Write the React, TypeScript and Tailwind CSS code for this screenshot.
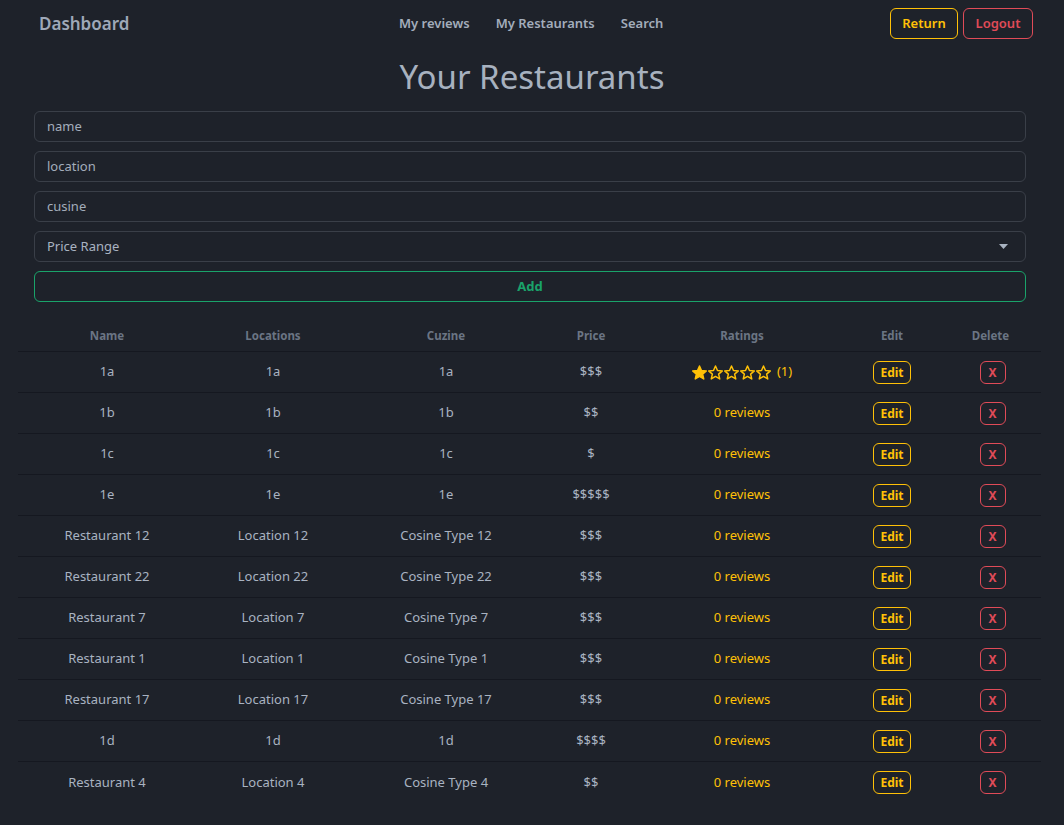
import React from "react";

type Row = { name: string; loc: string; cuz: string; price: string; rating?: number; count?: number };

const rows: Row[] = [
  { name: "1a", loc: "1a", cuz: "1a", price: "$$$", rating: 1, count: 1 },
  { name: "1b", loc: "1b", cuz: "1b", price: "$$" },
  { name: "1c", loc: "1c", cuz: "1c", price: "$" },
  { name: "1e", loc: "1e", cuz: "1e", price: "$$$$$" },
  { name: "Restaurant 12", loc: "Location 12", cuz: "Cosine Type 12", price: "$$$" },
  { name: "Restaurant 22", loc: "Location 22", cuz: "Cosine Type 22", price: "$$$" },
  { name: "Restaurant 7", loc: "Location 7", cuz: "Cosine Type 7", price: "$$$" },
  { name: "Restaurant 1", loc: "Location 1", cuz: "Cosine Type 1", price: "$$$" },
  { name: "Restaurant 17", loc: "Location 17", cuz: "Cosine Type 17", price: "$$$" },
  { name: "1d", loc: "1d", cuz: "1d", price: "$$$$" },
  { name: "Restaurant 4", loc: "Location 4", cuz: "Cosine Type 4", price: "$$" },
];

const cols = "grid grid-cols-[178px_154px_192px_98px_204px_96px_1fr]";

function Star({ filled }: { filled: boolean }) {
  return (
    <svg width="15" height="15" viewBox="1 1.5 22 21" className="shrink-0">
      <path
        d="M12 2.5l2.9 6.6 7.1.6-5.4 4.7 1.6 7-6.2-3.7-6.2 3.7 1.6-7L2 9.7l7.1-.6z"
        fill={filled ? "#ffc107" : "none"}
        stroke="#ffc107"
        strokeWidth="2.2"
        strokeLinejoin="round"
      />
    </svg>
  );
}

export default function App() {
  return (
    <div className="min-h-[825px] bg-[#1e222a] text-[#a9b3c1]" style={{ fontFamily: "'Noto Sans', 'Open Sans', sans-serif" }}>
      {/* Navbar */}
      <nav className="flex items-center h-[46px] pl-[39px] pr-[31px]">
        <div className="w-[360px] pt-[2px] text-[17px] font-semibold text-[#9ea8b8]">Dashboard</div>
        <div className="flex gap-[26px] pt-[2px] text-[13px] font-semibold text-[#a3adbb]">
          <span>My reviews</span>
          <span>My Restaurants</span>
          <span>Search</span>
        </div>
        <div className="ml-auto flex gap-[5px] text-[13px] font-semibold">
          <button className="h-[31px] w-[68px] pt-[1px] rounded-[6px] border border-[#ffc107] text-[#ffc107]">Return</button>
          <button className="h-[31px] w-[70px] pt-[1px] rounded-[6px] border border-[#e04b58] text-[#e04b58]">Logout</button>
        </div>
      </nav>

      <h1 className="text-center text-[33px] leading-[1.2] text-[#a7b1bf] mt-[11px] mb-[14px]">Your Restaurants</h1>

      {/* Form */}
      <div className="ml-[34px] mr-[38px] flex flex-col gap-[9px]">
        {["name", "location", "cusine"].map((p) => (
          <div key={p} className="h-[31px] rounded-[6px] border border-[#3a3f48] px-[12px] pt-[2px] flex items-center text-[13px] text-[#a3adbb]">
            {p}
          </div>
        ))}
        <div className="h-[31px] rounded-[6px] border border-[#3a3f48] pl-[12px] pr-[17px] pt-[2px] flex items-center justify-between text-[13px] text-[#a9b3c1]">
          <span>Price Range</span>
          <svg width="9" height="6" viewBox="0 0 9 6"><path d="M0 0h9L4.5 5z" fill="#a9b3c1" /></svg>
        </div>
        <button className="h-[31px] pt-[2px] rounded-[6px] border border-[#1aa36a] text-[#1aa36a] text-[13px] font-bold">Add</button>
      </div>

      {/* Table */}
      <div className="ml-[18px] mt-[18px] mr-[23px] text-[13px]">
        <div className={`${cols} h-[32px] pt-[2px] items-center text-center text-[11.5px] font-bold text-[#6b7584] border-b border-[#151820]`}>
          <div>Name</div>
          <div>Locations</div>
          <div>Cuzine</div>
          <div>Price</div>
          <div>Ratings</div>
          <div>Edit</div>
          <div>Delete</div>
        </div>
        {rows.map((r, i) => (
          <div
            key={i}
            className={`${cols} h-[41px] pt-[1px] items-center text-center ${i < rows.length - 1 ? "border-b border-[#151820]" : ""}`}
          >
            <div>{r.name}</div>
            <div>{r.loc}</div>
            <div>{r.cuz}</div>
            <div>{r.price}</div>
            <div className="flex justify-center items-center text-[#ffc107]">
              {r.rating ? (
                <span className="flex items-center gap-[1px]">
                  {[0, 1, 2, 3, 4].map((s) => (
                    <Star key={s} filled={s < (r.rating ?? 0)} />
                  ))}
                  <span className="ml-[5px]">({r.count})</span>
                </span>
              ) : (
                <span>0 reviews</span>
              )}
            </div>
            <div className="flex justify-center">
              <button className="h-[23px] w-[38px] pt-[1px] rounded-[6px] border border-[#ffc107] text-[#ffc107] text-[12px] font-bold leading-none">Edit</button>
            </div>
            <div className="flex justify-center pl-[4px]">
              <button className="h-[23px] w-[26px] pt-[1px] rounded-[6px] border border-[#e04b58] text-[#e04b58] text-[12px] font-bold leading-none">X</button>
            </div>
          </div>
        ))}
      </div>
    </div>
  );
}
